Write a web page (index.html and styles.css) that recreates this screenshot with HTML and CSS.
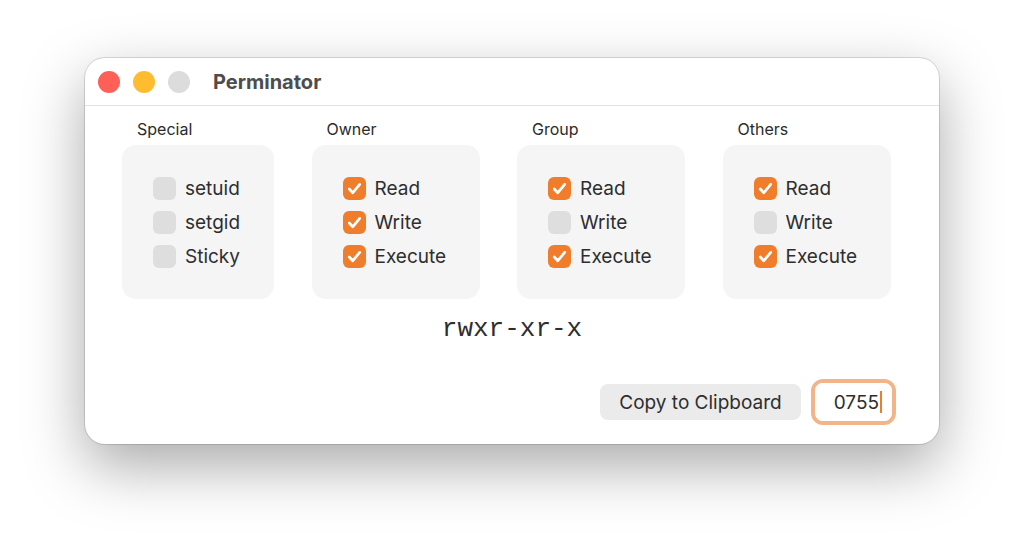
FILE: index.html
```html
<!DOCTYPE html>
<html>
<head>
<meta charset="utf-8">
<link rel="stylesheet" href="styles.css">
</head>
<body>
<div class="window">
  <div class="titlebar">
    <span class="light red"></span>
    <span class="light yellow"></span>
    <span class="light gray"></span>
    <span class="title">Perminator</span>
  </div>
  <div class="content">
    <div class="groups">
      <div class="group g-special">
        <div class="glabel">Special</div>
        <div class="gbox">
          <div class="row"><span class="cb"></span><span>setuid</span></div>
          <div class="row"><span class="cb"></span><span>setgid</span></div>
          <div class="row"><span class="cb"></span><span>Sticky</span></div>
        </div>
      </div>
      <div class="group">
        <div class="glabel">Owner</div>
        <div class="gbox">
          <div class="row"><span class="cb on"><svg viewBox="0 0 22 22"><path d="M6 11.5l3.3 3.6L16 7"/></svg></span><span>Read</span></div>
          <div class="row"><span class="cb on"><svg viewBox="0 0 22 22"><path d="M6 11.5l3.3 3.6L16 7"/></svg></span><span>Write</span></div>
          <div class="row"><span class="cb on"><svg viewBox="0 0 22 22"><path d="M6 11.5l3.3 3.6L16 7"/></svg></span><span>Execute</span></div>
        </div>
      </div>
      <div class="group">
        <div class="glabel">Group</div>
        <div class="gbox">
          <div class="row"><span class="cb on"><svg viewBox="0 0 22 22"><path d="M6 11.5l3.3 3.6L16 7"/></svg></span><span>Read</span></div>
          <div class="row"><span class="cb"></span><span>Write</span></div>
          <div class="row"><span class="cb on"><svg viewBox="0 0 22 22"><path d="M6 11.5l3.3 3.6L16 7"/></svg></span><span>Execute</span></div>
        </div>
      </div>
      <div class="group">
        <div class="glabel">Others</div>
        <div class="gbox">
          <div class="row"><span class="cb on"><svg viewBox="0 0 22 22"><path d="M6 11.5l3.3 3.6L16 7"/></svg></span><span>Read</span></div>
          <div class="row"><span class="cb"></span><span>Write</span></div>
          <div class="row"><span class="cb on"><svg viewBox="0 0 22 22"><path d="M6 11.5l3.3 3.6L16 7"/></svg></span><span>Execute</span></div>
        </div>
      </div>
    </div>
    <div class="symbolic">rwxr-xr-x</div>
    <div class="actions">
      <div class="btn">Copy to Clipboard</div>
      <div class="field"><div class="field-inner"><span>0755</span><span class="caret"></span></div></div>
    </div>
  </div>
</div>
</body>
</html>
```

FILE: styles.css
```css
html, body {
  margin: 0;
  padding: 0;
  background: #ffffff;
}
body {
  font-family: Inter, "Noto Sans", "Liberation Sans", sans-serif;
  color: #2b2b2b;
  padding-top: 58px;
  min-height: 557px;
  box-sizing: border-box;
  overflow: hidden;
}
.window {
  width: 854px;
  height: 386px;
  margin: 0 auto;
  background: #ffffff;
  border-radius: 20px;
  box-shadow: 0 0 0 1px rgba(0,0,0,0.13), 0 22px 60px rgba(0,0,0,0.34);
  box-sizing: border-box;
  display: flex;
  flex-direction: column;
  overflow: hidden;
}
.titlebar {
  height: 47px;
  flex: none;
  display: flex;
  align-items: center;
  padding-left: 13px;
  border-bottom: 1px solid #e2e2e2;
  box-sizing: content-box;
}
.light {
  width: 22px;
  height: 22px;
  border-radius: 50%;
  margin-right: 13px;
}
.red { background: #fe5f57; }
.yellow { background: #febc2e; }
.gray { background: #dcdcdc; }
.title {
  margin-left: 10px;
  font-weight: 700;
  font-size: 20px;
  color: #4d4d4d;
}
.content {
  flex: 1;
  display: flex;
  flex-direction: column;
  padding: 14px 43px 19px 37px;
}
.groups {
  display: flex;
  gap: 37.5px;
}
.group {
  width: 168px;
}
.g-special { width: 152px; }
.glabel {
  font-size: 16px;
  line-height: 19px;
  padding-left: 15px;
  color: #2b2b2b;
}
.gbox {
  margin-top: 6px;
  background: #f5f5f5;
  border-radius: 14px;
  padding: 26px 0 26px 31px;
}
.row {
  height: 34px;
  display: flex;
  align-items: center;
  font-size: 19px;
  color: #2e2e2e;
}
.cb {
  width: 23px;
  height: 23px;
  border-radius: 6px;
  background: #dedede;
  margin-right: 9px;
  flex: none;
  display: flex;
}
.cb.on { background: #f07d2c; }
.cb svg {
  width: 23px;
  height: 23px;
}
.cb svg path {
  fill: none;
  stroke: #ffffff;
  stroke-width: 2.6;
  stroke-linecap: round;
  stroke-linejoin: round;
}
.symbolic {
  margin-top: 15px;
  text-align: center;
  font-family: "Liberation Mono", "DejaVu Sans Mono", monospace;
  font-size: 26px;
  line-height: 30px;
  color: #2e2e2e;
  padding-left: 6px;
}
.actions {
  margin-top: 35px;
  display: flex;
  justify-content: flex-end;
  align-items: center;
  gap: 10px;
}
.btn {
  width: 201px;
  height: 36px;
  border-radius: 8px;
  background: #ebebeb;
  font-size: 19px;
  display: flex;
  align-items: center;
  justify-content: center;
  color: #2e2e2e;
}
.field {
  width: 85px;
  height: 46px;
  box-sizing: border-box;
  border: 4px solid #f4b48a;
  border-radius: 12px;
  padding: 0;
}
.field-inner {
  height: 100%;
  border-radius: 8px;
  background: #ffffff;
  display: flex;
  align-items: center;
  justify-content: flex-end;
  padding-right: 10px;
  font-size: 19px;
  color: #2e2e2e;
}
.caret {
  width: 2px;
  height: 22px;
  background: #f07d2c;
  margin-left: 1px;
}
```
